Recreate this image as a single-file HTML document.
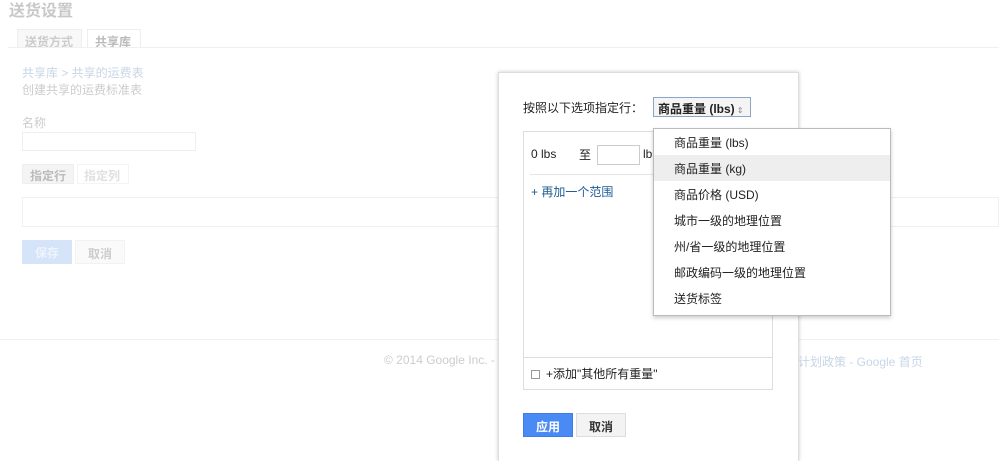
<!DOCTYPE html>
<html style="overflow:hidden;width:999px;height:461px"><head><meta charset="utf-8"><style>
*{margin:0;padding:0;box-sizing:border-box}
body{width:999px;height:461px;overflow:hidden;background:#fff;font-family:"Liberation Sans","Noto Sans CJK SC",sans-serif;font-size:12px;position:relative;color:#222}
.a{position:absolute;white-space:nowrap}
</style></head><body>
<div class="a" style="left:9px;top:-3px;font-size:16px;color:#c8c8c8;font-weight:bold">送货设置</div>
<div class="a" style="left:17px;top:29px;width:65px;height:19px;border:1px solid #eee;border-bottom:none;background:#f8f8f8;color:#ccc;font-weight:bold;font-size:12px;padding:3px 0 0 7px">送货方式</div>
<div class="a" style="left:87px;top:29px;width:54px;height:19px;border:1px solid #eee;border-bottom:none;color:#bbb;font-weight:bold;font-size:12px;padding:3px 0 0 7px">共享库</div>
<div class="a" style="left:8px;top:47px;width:991px;border-top:1px solid #f0f0f0"></div>
<div class="a" style="left:22px;top:64px;color:#c8d6e8">共享库 &gt; 共享的运费表</div>
<div class="a" style="left:22px;top:81px;color:#ccc">创建共享的运费标准表</div>
<div class="a" style="left:22px;top:114px;color:#ccc">名称</div>
<div class="a" style="left:22px;top:132px;width:174px;height:19px;border:1px solid #eee"></div>
<div class="a" style="left:22px;top:164px;width:52px;height:20px;background:#f4f4f4;border:1px solid #eee;color:#bbb;font-weight:bold;font-size:12px;padding:2px 0 0 7px">指定行</div>
<div class="a" style="left:77px;top:164px;width:52px;height:20px;border:1px solid #f4f4f4;color:#e0e0e0;font-weight:bold;font-size:12px;padding:2px 0 0 6px">指定列</div>
<div class="a" style="left:22px;top:197px;width:977px;height:30px;border:1px solid #f0f0f0"></div>
<div class="a" style="left:22px;top:240px;width:50px;height:24px;background:#d6e4fa;color:#eef4fd;font-weight:bold;font-size:12px;padding:4px 0 0 13px">保存</div>
<div class="a" style="left:75px;top:240px;width:50px;height:24px;background:#fafafa;border:1px solid #f2f2f2;color:#ccc;font-weight:bold;font-size:12px;padding:4px 0 0 12px">取消</div>
<div class="a" style="left:0;top:339px;width:999px;border-top:1px solid #f0f0f0"></div>
<div class="a" style="left:384px;top:353px;color:#ccc">© 2014 Google Inc. -</div>
<div class="a" style="left:798px;top:353px;color:#c8d6e8">计划政策 - Google 首页</div>

<div class="a" style="left:498px;top:72px;width:301px;height:389px;background:#fff;box-shadow:0 0 4px rgba(0,0,0,.2);border:1px solid #ddd;border-bottom:none"></div>
<div class="a" style="left:523px;top:99px;font-size:12px">按照以下选项指定行：</div>
<div class="a" style="left:653px;top:97px;width:98px;height:20px;border:1px solid #8aa5c8;background:#f4f4f4;font-weight:bold;font-size:12px;padding:2px 0 0 4px">商品重量 (lbs)<span style="font-size:8px;color:#888;font-weight:normal"> ⇕</span></div>
<div class="a" style="left:523px;top:131px;width:250px;height:259px;border:1px solid #ddd"></div>
<div class="a" style="left:531px;top:147px">0 lbs</div>
<div class="a" style="left:579px;top:146px;font-size:12px">至</div>
<div class="a" style="left:597px;top:145px;width:43px;height:20px;border:1px solid #ccc"></div>
<div class="a" style="left:643px;top:147px">lb</div>
<div class="a" style="left:530px;top:174px;width:235px;border-top:1px solid #e5e5e5"></div>
<div class="a" style="left:531px;top:183px;color:#1c5a94;font-size:12px">+ 再加一个范围</div>
<div class="a" style="left:524px;top:357px;width:248px;border-top:1px solid #ddd"></div>
<div class="a" style="left:531px;top:370px;width:9px;height:9px;border:1px solid #999"></div>
<div class="a" style="left:546px;top:365px;font-size:12px">+添加"其他所有重量"</div>
<div class="a" style="left:523px;top:413px;width:50px;height:24px;background:#4a8af4;border:1px solid #3f7ce8;color:#fff;font-weight:bold;font-size:12px;padding:4px 0 0 12px">应用</div>
<div class="a" style="left:576px;top:413px;width:50px;height:24px;background:#f3f3f3;border:1px solid #ddd;font-weight:bold;font-size:12px;padding:4px 0 0 12px;color:#333">取消</div>

<div class="a" style="left:653px;top:128px;width:238px;height:188px;background:#fff;border:1px solid #bbb;box-shadow:0 2px 4px rgba(0,0,0,.2);font-size:12px;color:#222">
<div style="height:26px;padding:5px 0 0 20px">商品重量 (lbs)</div>
<div style="height:26px;padding:5px 0 0 20px;background:#eee">商品重量 (kg)</div>
<div style="height:26px;padding:5px 0 0 20px">商品价格 (USD)</div>
<div style="height:26px;padding:5px 0 0 20px">城市一级的地理位置</div>
<div style="height:26px;padding:5px 0 0 20px">州/省一级的地理位置</div>
<div style="height:26px;padding:5px 0 0 20px">邮政编码一级的地理位置</div>
<div style="height:26px;padding:5px 0 0 20px">送货标签</div>
</div>
</body></html>
